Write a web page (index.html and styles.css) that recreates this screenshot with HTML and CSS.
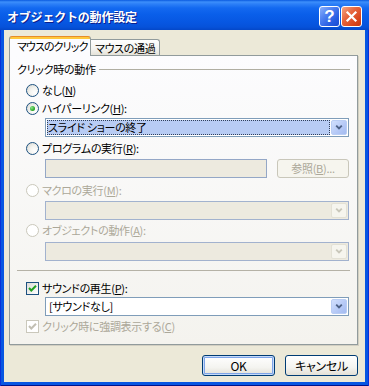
FILE: index.html
```html
<!DOCTYPE html>
<html lang="ja">
<head>
<meta charset="utf-8">
<title>オブジェクトの動作設定</title>
<link rel="stylesheet" href="styles.css">
</head>
<body>
<div class="window">
  <div class="titlebar">
    <span class="title">オブジェクトの動作設定</span>
    <div class="tb-buttons">
      <span class="tb-btn help">?</span>
      <span class="tb-btn close"><svg width="19" height="19" viewBox="0 0 19 19"><path d="M5.5 5.5 L13.5 13.5 M13.5 5.5 L5.5 13.5" stroke="#fff" stroke-width="2.2" stroke-linecap="square"/></svg></span>
    </div>
  </div>
  <div class="client">
    <div class="tabs">
      <div class="tab active">マウスのクリック</div>
      <div class="tab">マウスの通過</div>
    </div>
    <div class="panel">
      <div class="ghead"><span>クリック時の動作</span><span class="gline"></span></div>

      <div class="opt r1"><span class="radio"></span><span>なし(<u>N</u>)</span></div>
      <div class="opt r2"><span class="radio on"></span><span>ハイパーリンク(<u>H</u>):</span></div>
      <div class="combo sel1">
        <span class="val focus">スライド ショーの終了</span>
        <span class="drop"><svg width="15" height="15" viewBox="0 0 15 15"><path d="M4.5 5.5 L7.5 8.5 L10.5 5.5" fill="none" stroke="#4D6185" stroke-width="2"/></svg></span>
      </div>

      <div class="opt r3"><span class="radio"></span><span>プログラムの実行(<u>R</u>):</span></div>
      <div class="inrow">
        <span class="textbox"></span>
        <span class="browse">参照(<u>B</u>)...</span>
      </div>

      <div class="opt r4 dis"><span class="radio dis"></span><span>マクロの実行(<u>M</u>):</span></div>
      <div class="combo disabled sel2">
        <span class="val"></span>
        <span class="drop"><svg width="15" height="15" viewBox="0 0 15 15"><path d="M4.5 5.5 L7.5 8.5 L10.5 5.5" fill="none" stroke="#C9C7BA" stroke-width="2"/></svg></span>
      </div>

      <div class="opt r5 dis"><span class="radio dis"></span><span>オブジェクトの動作(<u>A</u>):</span></div>
      <div class="combo disabled sel3">
        <span class="val"></span>
        <span class="drop"><svg width="15" height="15" viewBox="0 0 15 15"><path d="M4.5 5.5 L7.5 8.5 L10.5 5.5" fill="none" stroke="#C9C7BA" stroke-width="2"/></svg></span>
      </div>

      <div class="sep"></div>

      <div class="opt c1"><span class="check"><svg width="11" height="11" viewBox="0 0 11 11"><path d="M2 5 L4.3 7.5 L9 2.8" fill="none" stroke="#21A121" stroke-width="2"/></svg></span><span>サウンドの再生(<u>P</u>):</span></div>
      <div class="combo sel4">
        <span class="val plain">[サウンドなし]</span>
        <span class="drop"><svg width="15" height="15" viewBox="0 0 15 15"><path d="M4.5 5.5 L7.5 8.5 L10.5 5.5" fill="none" stroke="#4D6185" stroke-width="2"/></svg></span>
      </div>

      <div class="opt c2 dis"><span class="check dis"><svg width="11" height="11" viewBox="0 0 11 11"><path d="M2 5 L4.3 7.5 L9 2.8" fill="none" stroke="#C2BFB3" stroke-width="2"/></svg></span><span>クリック時に強調表示する(<u>C</u>)</span></div>
    </div>
    <div class="actions">
      <span class="btn default">OK</span>
      <span class="btn">キャンセル</span>
    </div>
  </div>
</div>
</body>
</html>
```

FILE: styles.css
```css
* { box-sizing: border-box; }
html, body { margin: 0; padding: 0; }
body {
  width: 369px;
  height: 386px;
  overflow: hidden;
  font-family: "Noto Sans CJK JP", sans-serif;
  font-size: 11px;
  letter-spacing: -0.3px;
  font-feature-settings: "palt";
  color: #000;
  background: #fff;
  white-space: nowrap;
}
u { text-decoration: underline; text-underline-offset: 1px; }

.window {
  width: 369px;
  height: 386px;
  display: flex;
  flex-direction: column;
  background: #0756E2;
  box-shadow: inset 1px 0 0 #0831D9, inset -1px 0 0 #0831D9, inset 0 -1px 0 #00138C;
}

.titlebar {
  height: 30px;
  flex: none;
  display: flex;
  align-items: center;
  padding: 3px 7px 0 7px;
  background: linear-gradient(to bottom, #0A5AE0 0px, #3D8FFB 2px, #2C7FF7 4px, #1369F0 8px, #0A5FEA 14px, #0757E2 22px, #0652DA 27px, #0447C8 30px);
}
.title {
  flex: 1;
  color: #fff;
  font-weight: bold;
  font-size: 12px;
  font-feature-settings: normal;
  letter-spacing: -0.2px;
  line-height: 16px;
  text-shadow: 1px 1px 0 #0A1E8C;
}
.tb-buttons { display: flex; gap: 1px; }
.tb-btn {
  width: 21px;
  height: 21px;
  border: 1px solid #fff;
  border-radius: 3px;
  display: flex;
  align-items: center;
  justify-content: center;
}
.help {
  background: linear-gradient(135deg, #8AB0FB 0%, #4A7DF0 40%, #2459E0 75%, #1B4CD2 100%);
  color: #fff;
  font-family: "Liberation Sans", sans-serif;
  font-weight: bold;
  font-size: 17px;
  line-height: 19px;
  letter-spacing: 0;
}
.close {
  background: linear-gradient(135deg, #F4A483 0%, #E6653E 40%, #D9461D 75%, #C43812 100%);
}

.client {
  flex: 1;
  margin: 0 4px 4px 4px;
  background: #ECE9D8;
  padding: 6px 7px 0 5px;
  display: flex;
  flex-direction: column;
}

.tabs {
  display: flex;
  align-items: flex-end;
  height: 20px;
  margin-bottom: -1px;
  position: relative;
  z-index: 1;
}
.tab {
  width: 69px;
  height: 16px;
  margin-bottom: 1px;
  border: 1px solid #919B9C;
  border-bottom: none;
  border-left: none;
  border-radius: 0 3px 0 0;
  background: linear-gradient(#FFFFFF, #F3F3EF 60%, #E4E2D8);
  padding-left: 4px;
  line-height: 16px;
  overflow: hidden;
}
.tab.active {
  width: 82px;
  height: 20px;
  margin-bottom: 0;
  border-left: 1px solid #919B9C;
  border-top-color: #E68B2C;
  border-radius: 3px 3px 0 0;
  background: linear-gradient(#FFC83C 0, #FFC83C 2px, #FCFCFE 2px);
  padding-left: 7px;
  line-height: 17px;
  padding-top: 1px;
  letter-spacing: -0.9px;
}

.panel {
  width: 349px;
  height: 290px;
  border: 1px solid #919B9C;
  background: linear-gradient(#FCFCFE, #F4F3EE);
  box-shadow: 1px 1px 0 #D2CFC2;
  padding: 6px 7px 0 7px;
  display: flex;
  flex-direction: column;
}

.ghead {
  height: 14px;
  display: flex;
  align-items: center;
  gap: 3px;
  line-height: 14px;
}
.gline { flex: 1; height: 1px; background: #B0AEA2; }

.opt {
  height: 18px;
  display: flex;
  align-items: center;
  gap: 3px;
  padding-left: 9px;
  line-height: 16px;
}
.opt.dis { color: #ACA899; }
.r1 { margin-top: 5px; }
.r3 { margin-top: 2px; }
.r4 { margin-top: 3px; }
.r5 { margin-top: 1px; }
.c1 { margin-top: 9px; height: 16px; }
.c2 { margin-top: 2px; height: 16px; }

.radio {
  flex: none;
  width: 13px;
  height: 13px;
  border-radius: 50%;
  border: 1px solid #1C5180;
  background: radial-gradient(circle at 70% 70%, #FFFFFF 0%, #F3F3EF 45%, #D3D3CC 100%);
  display: flex;
  align-items: center;
  justify-content: center;
}
.radio.on::after {
  content: "";
  width: 5px;
  height: 5px;
  border-radius: 50%;
  background: radial-gradient(circle at 35% 35%, #8CE68A, #21A121 70%);
}
.radio.dis { border-color: #CAC8BB; background: #FFFFFF; }

.check {
  flex: none;
  width: 13px;
  height: 13px;
  border: 1px solid #1C5180;
  background: linear-gradient(135deg, #DCDCD7, #FFFFFF);
  display: flex;
}
.check.dis { border-color: #CAC8BB; background: #FFFFFF; }

.combo {
  display: flex;
  height: 19px;
  margin-left: 28px;
  margin-right: 1px;
  border: 1px solid #7F9DB9;
  background: #fff;
  padding: 1px;
}
.combo .val {
  flex: 1;
  line-height: 15px;
  padding-left: 1px;
  margin-right: 1px;
}
.combo .val.focus {
  background: #B8CCF4;
  outline: 1px dotted #30405A;
  outline-offset: -1px;
}
.combo .val.plain { padding-left: 2px; }
.combo .drop {
  width: 16px;
  flex: none;
  border: 1px solid #B9CDF4;
  border-radius: 2px;
  background: linear-gradient(135deg, #D2E0FD, #B4C8F6 60%, #A4BBF0);
  display: flex;
  align-items: center;
  justify-content: center;
}
.combo.disabled { background: #EDEADF; border-color: #A2B2CE; }
.combo.disabled .drop { background: #F6F5EE; border-color: #E3E1D5; }

.sel1 { margin-top: 1px; }
.sel2 { margin-top: 2px; }
.sel3 { margin-top: 3px; }
.sel4 { margin-top: 1px; }

.inrow {
  display: flex;
  gap: 10px;
  height: 19px;
  margin: 2px 1px 0 28px;
}
.textbox {
  width: 222px;
  border: 1px solid #94A7C6;
  background: #EDEADF;
}
.browse {
  flex: 1;
  border: 1px solid #C9C7BA;
  border-radius: 3px;
  background: #F6F5EE;
  color: #ACA899;
  text-align: center;
  line-height: 17px;
}

.sep { height: 1px; background: #B5B2A6; margin-top: 9px; }

.actions {
  display: flex;
  justify-content: flex-end;
  gap: 10px;
  margin-top: 10px;
}
.btn {
  width: 73px;
  height: 21px;
  border: 1px solid #003C74;
  border-radius: 3px;
  background: linear-gradient(#FFFFFF, #F4F4F0 60%, #E3E0D6);
  text-align: center;
  line-height: 19px;
  font-size: 12px;
}
.btn.default {
  box-shadow: inset 0 0 0 1px #C5DAF9, inset 0 0 0 2px #7EA4E8;
}
```
